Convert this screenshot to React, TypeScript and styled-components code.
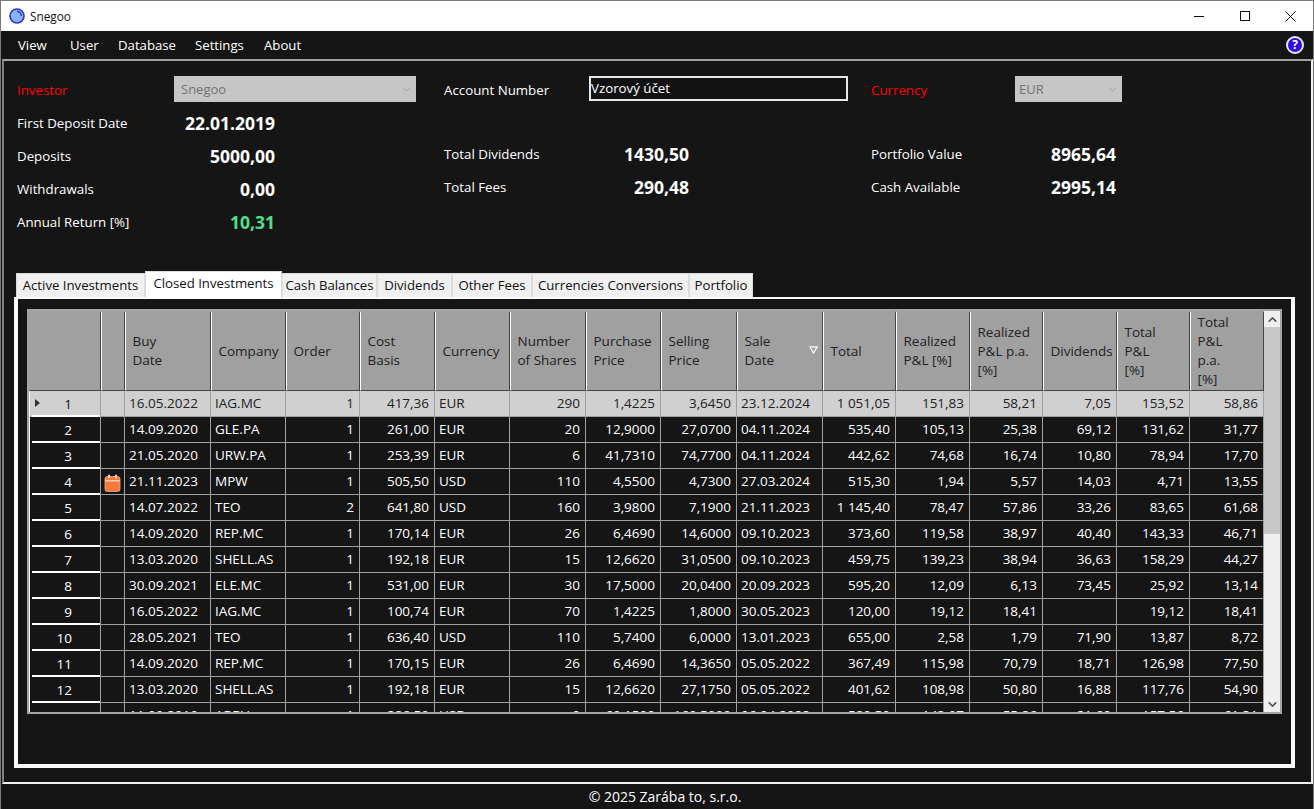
import React from 'react'
import styled, { createGlobalStyle } from 'styled-components'
import { ChevronDown, ChevronUp } from 'lucide-react'

const GlobalStyle = createGlobalStyle`
    html, body {
        margin: 0;
        padding: 0;
        height: 100%;
        background: #151515;
        overflow: hidden;
    }
    * {
        box-sizing: border-box;
    }
`

const font = `"Open Sans", "Noto Sans", "Liberation Sans", sans-serif`

const Window = styled.div`
    width: 1314px;
    height: 809px;
    display: flex;
    flex-direction: column;
    background: #151515;
    border: solid #7a7a7a;
    border-width: 1px 1px 0 1px;
    font-family: ${font};
    color: #fff;
`

const TitleBar = styled.div`
    height: 30px;
    flex: none;
    display: flex;
    align-items: center;
    padding-left: 8px;
    background: #fff;
    color: #111;
    font-size: 11.8px;
`

const TitleText = styled.span`
    margin-left: 5px;
`

const WindowControls = styled.div`
    margin-left: auto;
    display: flex;
    height: 100%;
`

const WindowButton = styled.div`
    width: 45.5px;
    display: flex;
    align-items: center;
    justify-content: center;
`

const MenuBar = styled.div`
    height: 28px;
    flex: none;
    display: flex;
    align-items: center;
    padding: 0 9px 0 17px;
    font-size: 13.2px;
`

const MenuItem = styled.span<{ $width: number }>`
    width: ${(p) => p.$width}px;
`

const HelpBadge = styled.div`
    margin-left: auto;
    width: 18px;
    height: 18px;
    border-radius: 50%;
    border: 2px solid #e6e6ff;
    background: #2c0fdc;
    color: #fff;
    font-size: 12px;
    font-weight: 700;
    line-height: 14px;
    text-align: center;
`

const MainPanel = styled.div`
    flex: 1;
    min-height: 0;
    margin-left: 1px;
    display: flex;
    flex-direction: column;
    border: 2px solid #f0f0f0;
    border-top-color: #a0a0a0;
    border-left-color: #808080;
`

const Summary = styled.div`
    height: 210px;
    flex: none;
    display: grid;
    grid-template-columns: 427px 427px 1fr;
    padding: 16px 0 0 13px;
`

const SummaryColumn = styled.div`
    display: flex;
    flex-direction: column;
`

const Field = styled.div<{ $offset?: number }>`
    height: 26px;
    margin-bottom: 7px;
    margin-top: ${(p) => p.$offset || 0}px;
    display: flex;
    align-items: center;
`

const Label = styled.div<{ $width: number; $required?: boolean }>`
    width: ${(p) => p.$width}px;
    flex: none;
    font-size: 13.3px;
    color: ${(p) => (p.$required ? '#ff0000' : '#fff')};
`

const Value = styled.div<{ $green?: boolean }>`
    width: 101px;
    text-align: right;
    font-size: 17.5px;
    font-weight: 700;
    color: ${(p) => (p.$green ? '#4fe08c' : '#fff')};
`

const FakeSelect = styled.div<{ $width: number; $pad: number }>`
    width: ${(p) => p.$width}px;
    height: 26px;
    margin-top: -2px;
    display: flex;
    align-items: center;
    justify-content: space-between;
    padding: 0 3px 0 ${(p) => p.$pad}px;
    background: #c6c6c6;
    color: #747474;
    font-size: 13px;
    svg {
        color: #999;
    }
`

const AccountInput = styled.input`
    width: 259px;
    height: 25px;
    margin-top: -3px;
    padding: 0 0 2px 0;
    background: #121212;
    border: 2px solid #e8e8e8;
    outline: none;
    color: #fff;
    font-family: ${font};
    font-size: 13.3px;
`

const TabsArea = styled.div`
    flex: 1;
    min-height: 0;
    display: flex;
    flex-direction: column;
    margin: 0 16px 14px 10px;
`

const TabStrip = styled.div`
    height: 26px;
    flex: none;
    display: flex;
    align-items: flex-end;
    padding-left: 2px;
`

const Tab = styled.div<{ $width: number; $active?: boolean }>`
    width: ${(p) => p.$width}px;
    height: ${(p) => (p.$active ? 27 : 24)}px;
    margin-bottom: ${(p) => (p.$active ? -1 : 0)}px;
    padding-bottom: ${(p) => (p.$active ? 5 : 2)}px;
    display: flex;
    align-items: center;
    justify-content: center;
    position: relative;
    background: ${(p) => (p.$active ? '#fff' : '#f0f0f0')};
    border: 1px solid #dcdcdc;
    border-bottom: none;
    color: #111;
    font-size: 13.2px;
    white-space: nowrap;
`

const TabPage = styled.div`
    flex: 1;
    min-height: 0;
    border: solid #fafafa;
    border-width: 2px 4px 4px 4px;
    padding: 10px 9px;
`

const GridBox = styled.div`
    height: 405px;
    display: flex;
    border: 2px solid #a5a5a5;
`

const TableClip = styled.div`
    width: 1235px;
    flex: none;
    overflow: hidden;
`

const Table = styled.table`
    width: 1235px;
    table-layout: fixed;
    border-collapse: separate;
    border-spacing: 0;
    font-size: 13.5px;
`

const Col = styled.col<{ $width: number }>`
    width: ${(p) => p.$width}px;
`

const HeadCell = styled.th<{ $corner?: boolean }>`
    height: 80px;
    padding: 0 0 1px 6.5px;
    position: relative;
    background: #a0a0a0;
    color: #222;
    font-weight: 400;
    line-height: 19px;
    text-align: left;
    white-space: nowrap;
    border-top: 2px solid #a0a0a0;
    border-left: 1px solid ${(p) => (p.$corner ? '#a0a0a0' : '#fff')};
    border-right: 1px solid #444;
    border-bottom: 1px solid #444;
`

const SortGlyph = styled.svg`
    position: absolute;
    right: 4px;
    top: 33px;
`

const RowHead = styled.td<{ $selected?: boolean }>`
    height: 26px;
    padding: 0 28px 0 0;
    position: relative;
    text-align: right;
    color: ${(p) => (p.$selected ? '#111' : '#fff')};
    background: linear-gradient(#fff, #fff) no-repeat 2px 100% / 68px 2px
        ${(p) => (p.$selected ? '#d0d0d0' : 'transparent')};
    border-left: 1px solid #fff;
    border-right: 1px solid #a0a0a0;
    line-height: 25px;
`

const RowArrow = styled.span`
    position: absolute;
    left: 5px;
    top: 8px;
    border-style: solid;
    border-width: 4px 0 4px 5px;
    border-color: transparent transparent transparent #333;
`

const Cell = styled.td<{ $selected?: boolean; $left?: boolean }>`
    height: 26px;
    padding: ${(p) => (p.$left ? '0 0 0 4px' : '0 5px 0 0')};
    text-align: ${(p) => (p.$left ? 'left' : 'right')};
    color: ${(p) => (p.$selected ? '#222' : '#fff')};
    background: ${(p) => (p.$selected ? '#d0d0d0' : 'transparent')};
    border-right: 1px solid #a0a0a0;
    border-bottom: 1px solid #a0a0a0;
    line-height: 25px;
    white-space: nowrap;
`

const IconCell = styled(Cell)`
    padding: 2px 0 0 3px;
    svg {
        display: block;
    }
`

const Scrollbar = styled.div`
    flex: 1;
    display: flex;
    flex-direction: column;
    background: #efefef;
`

const ScrollArrow = styled.div`
    height: 16px;
    flex: none;
    display: flex;
    align-items: center;
    justify-content: center;
    color: #555;
`

const ScrollThumb = styled.div`
    height: 207px;
    flex: none;
    background: #c8c8c8;
`

const ScrollTrack = styled.div`
    flex: 1;
`

const Footer = styled.div`
    height: 25px;
    flex: none;
    padding-left: 16px;
    display: flex;
    align-items: center;
    justify-content: center;
    font-size: 14px;
`

const columnWidths = [72, 24, 86, 75, 74, 75, 75, 76, 75, 76, 86, 73, 74, 73, 74, 73, 74]

const headers = [
    ['Buy', 'Date'],
    ['Company'],
    ['Order'],
    ['Cost', 'Basis'],
    ['Currency'],
    ['Number', 'of Shares'],
    ['Purchase', 'Price'],
    ['Selling', 'Price'],
    ['Sale', 'Date'],
    ['Total'],
    ['Realized', 'P&L [%]'],
    ['Realized', 'P&L p.a.', '[%]'],
    ['Dividends'],
    ['Total', 'P&L', '[%]'],
    ['Total', 'P&L', 'p.a.', '[%]'],
]

// columns that hold text, everything else is right aligned
const leftColumns = [0, 1, 4, 8]

const rows = [
    ['16.05.2022', 'IAG.MC', '1', '417,36', 'EUR', '290', '1,4225', '3,6450', '23.12.2024', '1 051,05', '151,83', '58,21', '7,05', '153,52', '58,86'],
    ['14.09.2020', 'GLE.PA', '1', '261,00', 'EUR', '20', '12,9000', '27,0700', '04.11.2024', '535,40', '105,13', '25,38', '69,12', '131,62', '31,77'],
    ['21.05.2020', 'URW.PA', '1', '253,39', 'EUR', '6', '41,7310', '74,7700', '04.11.2024', '442,62', '74,68', '16,74', '10,80', '78,94', '17,70'],
    ['21.11.2023', 'MPW', '1', '505,50', 'USD', '110', '4,5500', '4,7300', '27.03.2024', '515,30', '1,94', '5,57', '14,03', '4,71', '13,55'],
    ['14.07.2022', 'TEO', '2', '641,80', 'USD', '160', '3,9800', '7,1900', '21.11.2023', '1 145,40', '78,47', '57,86', '33,26', '83,65', '61,68'],
    ['14.09.2020', 'REP.MC', '1', '170,14', 'EUR', '26', '6,4690', '14,6000', '09.10.2023', '373,60', '119,58', '38,97', '40,40', '143,33', '46,71'],
    ['13.03.2020', 'SHELL.AS', '1', '192,18', 'EUR', '15', '12,6620', '31,0500', '09.10.2023', '459,75', '139,23', '38,94', '36,63', '158,29', '44,27'],
    ['30.09.2021', 'ELE.MC', '1', '531,00', 'EUR', '30', '17,5000', '20,0400', '20.09.2023', '595,20', '12,09', '6,13', '73,45', '25,92', '13,14'],
    ['16.05.2022', 'IAG.MC', '1', '100,74', 'EUR', '70', '1,4225', '1,8000', '30.05.2023', '120,00', '19,12', '18,41', '', '19,12', '18,41'],
    ['28.05.2021', 'TEO', '1', '636,40', 'USD', '110', '5,7400', '6,0000', '13.01.2023', '655,00', '2,58', '1,79', '71,90', '13,87', '8,72'],
    ['14.09.2020', 'REP.MC', '1', '170,15', 'EUR', '26', '6,4690', '14,3650', '05.05.2022', '367,49', '115,98', '70,79', '18,71', '126,98', '77,50'],
    ['13.03.2020', 'SHELL.AS', '1', '192,18', 'EUR', '15', '12,6620', '27,1750', '05.05.2022', '401,62', '108,98', '50,80', '16,88', '117,76', '54,90'],
    ['11.09.2019', 'ABBV', '1', '286,50', 'USD', '9', '60,1500', '160,5000', '06.04.2022', '580,50', '143,97', '55,86', '21,60', '157,56', '61,31'],
]

const tabs = [
    { name: 'Active Investments', width: 129 },
    { name: 'Closed Investments', width: 137, active: true },
    { name: 'Cash Balances', width: 95 },
    { name: 'Dividends', width: 75 },
    { name: 'Other Fees', width: 80 },
    { name: 'Currencies Conversions', width: 157 },
    { name: 'Portfolio', width: 64 },
]

const menu = [
    { name: 'View', width: 52 },
    { name: 'User', width: 48 },
    { name: 'Database', width: 77 },
    { name: 'Settings', width: 69 },
    { name: 'About', width: 40 },
]

function AppIcon() {
    return (
        <svg width="16" height="16" viewBox="0 0 16 16">
            <circle cx="8" cy="8" r="7" fill="#86b4fb" stroke="#3a2be0" strokeWidth="1.6" />
            <path d="M8 3.6 A4.4 4.4 0 0 1 12.4 8" fill="none" stroke="#2a2a80" strokeWidth="1.2" />
        </svg>
    )
}

function CalendarIcon() {
    return (
        <svg width="17" height="18" viewBox="0 0 17 18">
            <rect x="1" y="2.5" width="15" height="15" rx="2.5" fill="#f5793b" stroke="#f7b08c" strokeWidth="0.8" />
            <rect x="1.5" y="6.2" width="14" height="1.2" fill="#fde4d6" />
            <rect x="4" y="0.5" width="2" height="4" rx="1" fill="#fbd9c6" />
            <rect x="11" y="0.5" width="2" height="4" rx="1" fill="#fbd9c6" />
        </svg>
    )
}

function App() {
    return (
        <Window>
            <GlobalStyle />
            <TitleBar>
                <AppIcon />
                <TitleText>Snegoo</TitleText>
                <WindowControls>
                    <WindowButton>
                        <svg width="10" height="10" viewBox="0 0 10 10">
                            <path d="M0 5.5H10" stroke="#111" strokeWidth="1" />
                        </svg>
                    </WindowButton>
                    <WindowButton>
                        <svg width="10" height="10" viewBox="0 0 10 10">
                            <rect x="0.5" y="0.5" width="9" height="9" fill="none" stroke="#111" strokeWidth="1" />
                        </svg>
                    </WindowButton>
                    <WindowButton>
                        <svg width="11" height="11" viewBox="0 0 11 11">
                            <path d="M0.5 0.5L10.5 10.5M10.5 0.5L0.5 10.5" stroke="#111" strokeWidth="1" />
                        </svg>
                    </WindowButton>
                </WindowControls>
            </TitleBar>

            <MenuBar>
                {menu.map((item) => (
                    <MenuItem key={item.name} $width={item.width}>{item.name}</MenuItem>
                ))}
                <HelpBadge>?</HelpBadge>
            </MenuBar>

            <MainPanel>
                <Summary>
                    <SummaryColumn>
                        <Field>
                            <Label $width={157} $required>Investor</Label>
                            <FakeSelect $width={242} $pad={7}>
                                Snegoo
                                <ChevronDown size={13} strokeWidth={1.5} />
                            </FakeSelect>
                        </Field>
                        <Field>
                            <Label $width={157}>First Deposit Date</Label>
                            <Value>22.01.2019</Value>
                        </Field>
                        <Field>
                            <Label $width={157}>Deposits</Label>
                            <Value>5000,00</Value>
                        </Field>
                        <Field>
                            <Label $width={157}>Withdrawals</Label>
                            <Value>0,00</Value>
                        </Field>
                        <Field>
                            <Label $width={157}>Annual Return [%]</Label>
                            <Value $green>10,31</Value>
                        </Field>
                    </SummaryColumn>
                    <SummaryColumn>
                        <Field>
                            <Label $width={145}>Account Number</Label>
                            <AccountInput readOnly value="Vzorový účet" />
                        </Field>
                        <Field $offset={31}>
                            <Label $width={144}>Total Dividends</Label>
                            <Value>1430,50</Value>
                        </Field>
                        <Field>
                            <Label $width={144}>Total Fees</Label>
                            <Value>290,48</Value>
                        </Field>
                    </SummaryColumn>
                    <SummaryColumn>
                        <Field>
                            <Label $width={144} $required>Currency</Label>
                            <FakeSelect $width={107} $pad={4}>
                                EUR
                                <ChevronDown size={13} strokeWidth={1.5} />
                            </FakeSelect>
                        </Field>
                        <Field $offset={31}>
                            <Label $width={144}>Portfolio Value</Label>
                            <Value>8965,64</Value>
                        </Field>
                        <Field>
                            <Label $width={144}>Cash Available</Label>
                            <Value>2995,14</Value>
                        </Field>
                    </SummaryColumn>
                </Summary>

                <TabsArea>
                    <TabStrip>
                        {tabs.map((tab) => (
                            <Tab key={tab.name} $width={tab.width} $active={tab.active}>{tab.name}</Tab>
                        ))}
                    </TabStrip>
                    <TabPage>
                        <GridBox>
                            <TableClip>
                                <Table>
                                    <colgroup>
                                        {columnWidths.map((w, i) => <Col key={i} $width={w} />)}
                                    </colgroup>
                                    <thead>
                                        <tr>
                                            <HeadCell $corner />
                                            <HeadCell />
                                            {headers.map((lines, i) => (
                                                <HeadCell key={i}>
                                                    {lines.map((line, j) => <div key={j}>{line}</div>)}
                                                    {i === 8 && (
                                                        <SortGlyph width="9" height="8" viewBox="0 0 9 8">
                                                            <path d="M0.8 0.8H8.2L4.5 7Z" fill="#a0a0a0" stroke="#fff" strokeWidth="1.2" />
                                                        </SortGlyph>
                                                    )}
                                                </HeadCell>
                                            ))}
                                        </tr>
                                    </thead>
                                    <tbody>
                                        {rows.map((row, r) => (
                                            <tr key={r}>
                                                <RowHead $selected={r === 0}>
                                                    {r === 0 && <RowArrow />}
                                                    {r + 1}
                                                </RowHead>
                                                <IconCell $selected={r === 0}>
                                                    {r === 3 && <CalendarIcon />}
                                                </IconCell>
                                                {row.map((value, c) => (
                                                    <Cell key={c} $selected={r === 0} $left={leftColumns.includes(c)}>{value}</Cell>
                                                ))}
                                            </tr>
                                        ))}
                                    </tbody>
                                </Table>
                            </TableClip>
                            <Scrollbar>
                                <ScrollArrow><ChevronUp size={13} strokeWidth={3} /></ScrollArrow>
                                <ScrollThumb />
                                <ScrollTrack />
                                <ScrollArrow><ChevronDown size={13} strokeWidth={3} /></ScrollArrow>
                            </Scrollbar>
                        </GridBox>
                    </TabPage>
                </TabsArea>
            </MainPanel>

            <Footer>© 2025 Zarába to, s.r.o.</Footer>
        </Window>
    )
}

export default App
